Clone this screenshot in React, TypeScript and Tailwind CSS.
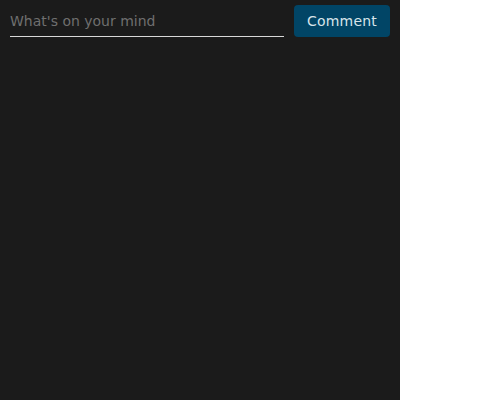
import React from "react";

export default function App() {
  return (
    <div className="h-[400px] w-[400px] bg-[#1b1b1b] font-['DejaVu_Sans',sans-serif]">
      <form className="flex items-start gap-[10px] px-[10px] pt-[5px]">
        <input
          type="text"
          placeholder="What's on your mind"
          className="h-[32px] flex-1 border-b border-[#d8d8d8] bg-transparent text-[14px] text-[#ddd] outline-none placeholder:text-[#6f6f6f]"
        />
        <button
          type="button"
          className="h-[32px] w-[96px] rounded-[4px] bg-[#014566] text-center text-[14px] tracking-[0.2px] text-[#d8e4ea]"
        >
          Comment
        </button>
      </form>
    </div>
  );
}
